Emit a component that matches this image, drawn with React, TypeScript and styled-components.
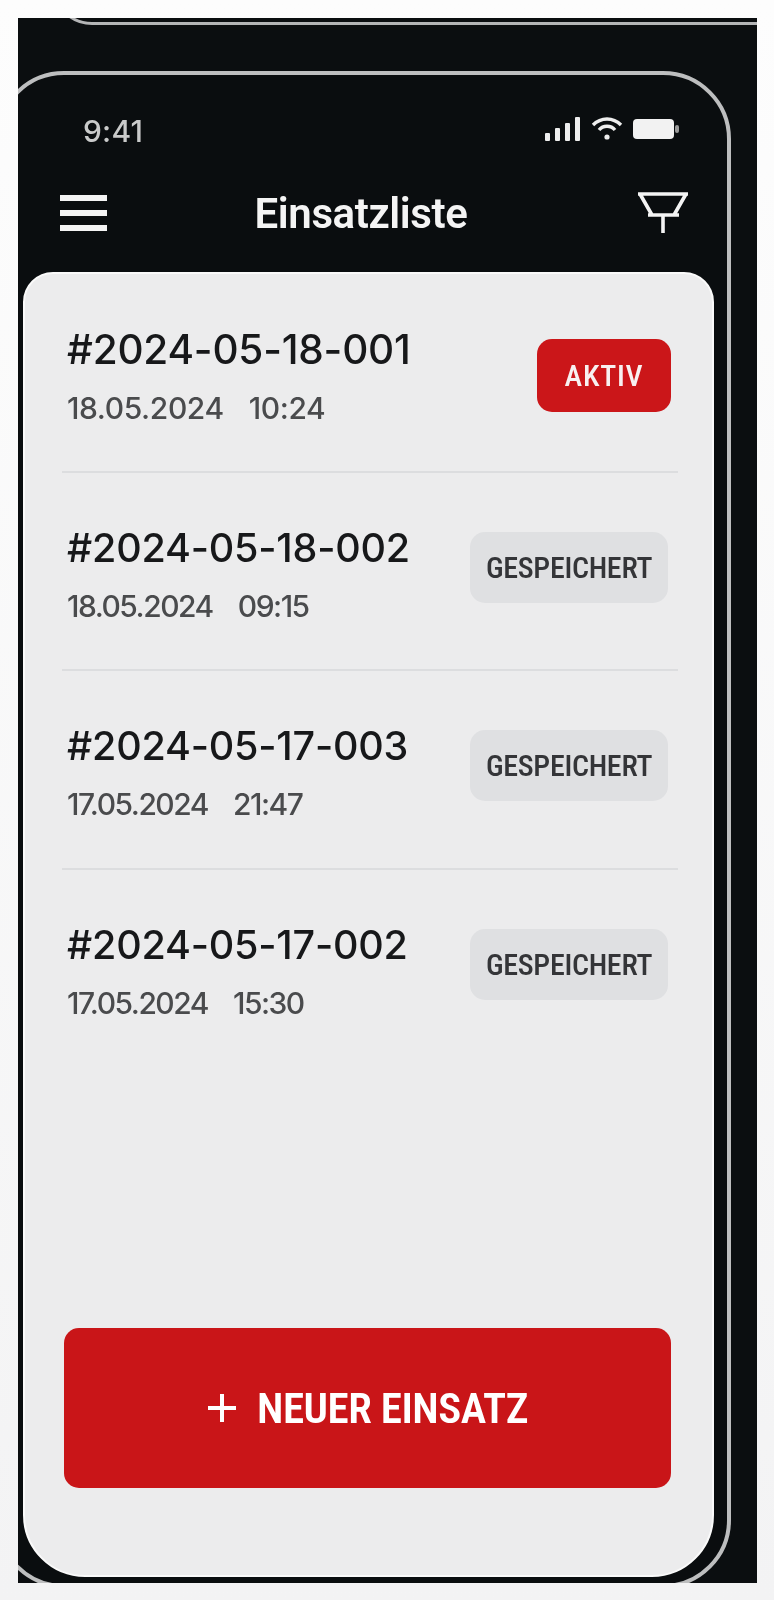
import React from 'react';
import styled, { createGlobalStyle } from 'styled-components';

const GlobalStyle = createGlobalStyle`
  html, body {
    margin: 0;
    padding: 0;
  }
  body {
    background: linear-gradient(#fdfdfd, #f3f3f4);
    font-family: Inter, "Liberation Sans", sans-serif;
  }
`;

const Page = styled.div`
  width: 774px;
  height: 1600px;
  padding: 18px 17px 17px 18px;
  box-sizing: border-box;
`;

const Backdrop = styled.div`
  position: relative;
  height: 100%;
  background: #0b0e10;
  overflow: hidden;
  padding: 53px 26px 0 0;
  box-sizing: border-box;
  filter: blur(0.5px);

  /* bottom edge of the phone above */
  &::before {
    content: '';
    position: absolute;
    left: 34px;
    right: -40px;
    top: -60px;
    height: 67px;
    border: 3px solid #b4b5b6;
    border-radius: 0 0 40px 40px;
    box-sizing: border-box;
  }
`;

const Phone = styled.div`
  height: 1517px;
  margin-left: -22px;
  border: 4px solid #bdbebf;
  border-radius: 68px;
  background: #0a0d0f;
  padding: 0 13px 0 23px;
  box-sizing: border-box;
`;

const StatusBar = styled.div`
  display: flex;
  justify-content: space-between;
  align-items: center;
  height: 32px;
  padding: 38px 35px 0 60px;
`;

const Clock = styled.span`
  margin-top: 3px;
  font-size: 30px;
  font-weight: 500;
  color: #c9caca;
  letter-spacing: 0.2px;
`;

const StatusIcons = styled.div`
  display: flex;
  align-items: center;
  gap: 10px;
`;

const NavBar = styled.div`
  display: flex;
  justify-content: space-between;
  align-items: center;
  height: 60px;
  padding: 37px 26px 0 37px;
`;

const NavTitle = styled.h1`
  margin: 2px 23px 0 0;
  font-family: Roboto, "Liberation Sans", sans-serif;
  font-size: 42px;
  font-weight: 600;
  font-stretch: 93%;
  color: #f4f4f4;
  letter-spacing: -0.4px;
`;

const Panel = styled.div`
  display: flex;
  flex-direction: column;
  height: 1305px;
  margin-top: 30px;
  padding: 0 34px 87px 37px;
  background: #ececed;
  border: 2px solid #fafafa;
  border-radius: 30px 30px 62px 62px;
  box-sizing: border-box;
`;

const Row = styled.div<{ $first?: boolean; $last?: boolean }>`
  display: flex;
  justify-content: space-between;
  align-items: flex-start;
  height: ${({ $first }) => ($first ? '199px' : '198.3px')};
  box-sizing: border-box;
  padding: ${({ $first }) => ($first ? '52px' : '51px')} 0 0 5px;
  border-bottom: ${({ $last }) => ($last ? 'none' : '2px solid #dcdddf')};
  flex-shrink: 0;
`;

const RowText = styled.div`
  display: flex;
  flex-direction: column;
`;

const RowTitle = styled.div<{ $first?: boolean }>`
  font-size: ${({ $first }) => ($first ? '40.5px' : '39.5px')};
  line-height: 48px;
  font-weight: 500;
  color: #17181a;
  letter-spacing: -0.2px;
`;

const RowMeta = styled.div<{ $first?: boolean }>`
  display: flex;
  gap: 25px;
  margin-top: 17px;
  font-size: 30px;
  line-height: 34px;
  font-weight: 450;
  color: #4a4b4d;
  letter-spacing: ${({ $first }) => ($first ? '-0.4px' : '-1.5px')};
`;

const Badge = styled.div<{ $active?: boolean }>`
  display: flex;
  align-items: center;
  justify-content: center;
  height: ${({ $active }) => ($active ? '73px' : '71px')};
  width: ${({ $active }) => ($active ? '134px' : '198px')};
  margin: ${({ $active }) => ($active ? '13px 7px 0 0' : '8px 10px 0 0')};
  border-radius: 15px;
  background: ${({ $active }) => ($active ? '#cb1619' : '#dfe0e2')};
  color: ${({ $active }) => ($active ? '#f8f0f0' : '#343538')};
  font-family: Roboto, "Liberation Sans", sans-serif;
  font-size: 30px;
  font-weight: 550;
  font-stretch: 80%;
  letter-spacing: ${({ $active }) => ($active ? '0.8px' : '-0.3px')};
`;

const NewButton = styled.button`
  display: flex;
  align-items: center;
  justify-content: center;
  gap: 20px;
  height: 160px;
  margin: auto 7px 0 2px;
  border: none;
  border-radius: 15px;
  background: #c91518;
  color: #fff;
  font-family: Roboto, "Liberation Sans", sans-serif;
  font-size: 43px;
  font-weight: 600;
  font-stretch: 80%;
  letter-spacing: -0.5px;
`;

const entries = [
  { id: '#2024-05-18-001', date: '18.05.2024', time: '10:24', active: true },
  { id: '#2024-05-18-002', date: '18.05.2024', time: '09:15' },
  { id: '#2024-05-17-003', date: '17.05.2024', time: '21:47' },
  { id: '#2024-05-17-002', date: '17.05.2024', time: '15:30' },
];

const SignalIcon = () => (
  <svg width="36" height="24" viewBox="0 0 36 24" fill="#eeeeee">
    <rect x="0" y="16" width="5" height="8" rx="1" />
    <rect x="10" y="11" width="5" height="13" rx="1" />
    <rect x="20" y="6" width="5" height="18" rx="1" />
    <rect x="30" y="0" width="5" height="24" rx="1" />
  </svg>
);

const WifiIcon = () => (
  <svg width="32" height="24" viewBox="0 0 32 24" fill="none" stroke="#eeeeee" strokeWidth="3.4">
    <path d="M2 8 C10 0 22 0 30 8" />
    <path d="M8 13 C12 8 20 8 24 13" />
    <circle cx="16" cy="20" r="2.6" fill="#eeeeee" stroke="none" />
  </svg>
);

const BatteryIcon = () => (
  <svg width="46" height="22" viewBox="0 0 46 22" fill="#f2f2f2">
    <rect x="0" y="1" width="41" height="20" rx="4" />
    <rect x="42" y="7" width="4" height="8" rx="2" fill="#9a9a9a" />
  </svg>
);

const MenuIcon = () => (
  <svg width="47" height="40" viewBox="0 0 47 40" fill="#f4f4f4">
    <rect x="0" y="3" width="47" height="6" />
    <rect x="0" y="18" width="47" height="6" />
    <rect x="0" y="33" width="47" height="6" />
  </svg>
);

const FilterIcon = () => (
  <svg width="50" height="41" viewBox="0 0 50 41" fill="none" stroke="#f4f4f4" strokeWidth="3.6">
    <path d="M0 2 H50 M2 2 L14 23 M48 2 L36 23 M10 23 H41 M25 23 V41" />
  </svg>
);

const PlusIcon = () => (
  <svg width="30" height="30" viewBox="0 0 30 30" stroke="#fff" strokeWidth="4">
    <path d="M1 15 H29 M15 1 V29" />
  </svg>
);

export default function App() {
  return (
    <Page>
      <GlobalStyle />
      <Backdrop>
        <Phone>
          <StatusBar>
            <Clock>9:41</Clock>
            <StatusIcons>
              <SignalIcon />
              <WifiIcon />
              <BatteryIcon />
            </StatusIcons>
          </StatusBar>
          <NavBar>
            <MenuIcon />
            <NavTitle>Einsatzliste</NavTitle>
            <FilterIcon />
          </NavBar>
          <Panel>
            {entries.map((entry, i) => (
              <Row key={entry.id} $first={i === 0} $last={i === entries.length - 1}>
                <RowText>
                  <RowTitle $first={i === 0}>{entry.id}</RowTitle>
                  <RowMeta $first={i === 0}>
                    <span>{entry.date}</span>
                    <span>{entry.time}</span>
                  </RowMeta>
                </RowText>
                <Badge $active={entry.active}>{entry.active ? 'AKTIV' : 'GESPEICHERT'}</Badge>
              </Row>
            ))}
            <NewButton>
              <PlusIcon />
              NEUER EINSATZ
            </NewButton>
          </Panel>
        </Phone>
      </Backdrop>
    </Page>
  );
}
